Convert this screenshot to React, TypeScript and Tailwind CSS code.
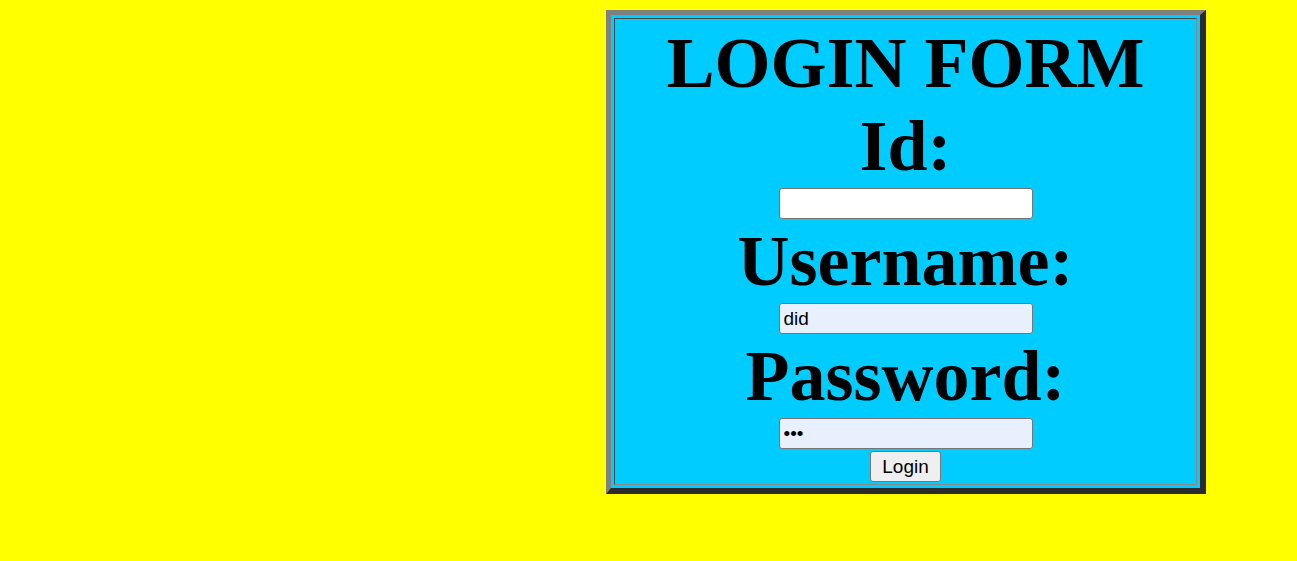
import React from "react";

const Label: React.FC<{ text: string }> = ({ text }) => (
  <div className="leading-[83px] text-[72px] font-bold">{text}</div>
);

const Field: React.FC<{ type?: string; value?: string; filled?: boolean }> = ({
  type = "text",
  value = "",
  filled,
}) => (
  <div className="flex h-[32px] items-start justify-center">
    <input
      type={type}
      defaultValue={value}
      readOnly
      className={`h-[31px] w-[254px] rounded-[3px] border border-[#767676] px-[4px] font-['Liberation_Sans',Arial,sans-serif] text-[19px] text-black outline-none ${
        filled ? "bg-[#e8f0fe]" : "bg-white"
      }`}
    />
  </div>
);

export default function App() {
  return (
    <div className="h-[561px] w-full bg-[#ffff00] pt-[10px] pl-[606px] font-['Liberation_Serif','Times_New_Roman',serif]">
      <div className="w-[600px] border-[5px] border-t-[#808080] border-l-[#808080] border-r-[#2b2b2b] border-b-[#2b2b2b] bg-[#00ccff] p-[3px] border-r-[6px] border-b-[6px]">
        {/* login cell */}
        <div className="flex flex-col items-center border border-t-[#4a4a4a] border-l-[#4a4a4a] border-r-[#8a8a8a] border-b-[#8a8a8a] pt-[3px] pb-[2px] text-center text-black">
          <Label text="LOGIN FORM" />
          <Label text="Id:" />
          <Field />
          <Label text="Username:" />
          <Field value="did" filled />
          <Label text="Password:" />
          <Field type="password" value="abc" filled />
          <button className="mt-[1px] h-[31px] rounded-[3px] border border-[#767676] bg-[#efefef] px-[11px] font-['Liberation_Sans',Arial,sans-serif] text-[19px] leading-none text-black">
            Login
          </button>
        </div>
      </div>
    </div>
  );
}
